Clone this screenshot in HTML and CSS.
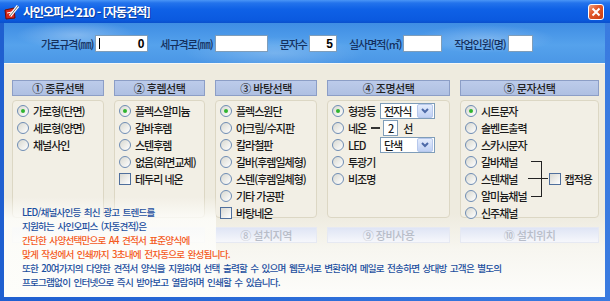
FILE: index.html
```html
<!DOCTYPE html>
<html lang="ko">
<head>
  <meta charset="UTF-8" />
  <title>사인오피스'210 - [자동견적]</title>
  <link rel="stylesheet" href="styles.css">
</head>
<body>

<div class="window">
  <div class="titlebar">
    <svg class="app-icon" width="16" height="16" viewBox="0 0 16 16">
      <path d="M1 6 L10 4 L11 14 L2 15 Z" fill="#d8261a" stroke="#6e0c06" stroke-width="1"/>
      <path d="M3 9 L8 8" stroke="#fff" stroke-width="1"/>
      <path d="M6 12 L14 2" stroke="#fff" stroke-width="3"/>
      <path d="M6 12 L14 2" stroke="#666" stroke-width="1"/>
    </svg>
    <span class="title">사인오피스'210 - [자동견적]</span>
    <span class="close-btn">
      <svg width="10" height="10" viewBox="0 0 10 10">
        <path d="M1.5 1.5 L8.5 8.5 M8.5 1.5 L1.5 8.5" stroke="#fff" stroke-width="2"/>
      </svg>
    </span>
  </div>

  <div class="frame">
    <div class="sky">
      <div class="spec-row">
        <label class="lbl">가로규격(㎜)</label>
        <span class="field w53"><i class="caret"></i>0</span>
        <label class="lbl">세규격로(㎜)</label>
        <span class="field w53"></span>
        <label class="lbl">문자수</label>
        <span class="field w28">5</span>
        <label class="lbl">실사면적(㎡)</label>
        <span class="field w39"></span>
        <label class="lbl">작업인원(명)</label>
        <span class="field w25"></span>
      </div>
    </div>

    <div class="panel">
      <div class="columns">
        <div class="col c1">
          <div class="col-head">① 종류선택</div>
          <div class="col-box">
            <div class="opt"><span class="radio on"></span>가로형(단면)</div>
            <div class="opt"><span class="radio"></span>세로형(양면)</div>
            <div class="opt"><span class="radio"></span>채널사인</div>
          </div>
          <div class="col-head faded"></div>
        </div>

        <div class="col c2">
          <div class="col-head">② 후렘선택</div>
          <div class="col-box">
            <div class="opt"><span class="radio on"></span>플렉스알미늄</div>
            <div class="opt"><span class="radio"></span>갈바후렘</div>
            <div class="opt"><span class="radio"></span>스텐후렘</div>
            <div class="opt"><span class="radio"></span>없음(화면교체)</div>
            <div class="opt"><span class="check"></span>테두리 네온</div>
          </div>
          <div class="col-head faded"></div>
        </div>

        <div class="col c3">
          <div class="col-head">③ 바탕선택</div>
          <div class="col-box">
            <div class="opt"><span class="radio on"></span>플렉스원단</div>
            <div class="opt"><span class="radio"></span>아크릴/수지판</div>
            <div class="opt"><span class="radio"></span>칼라철판</div>
            <div class="opt"><span class="radio"></span>갈바(후렘일체형)</div>
            <div class="opt"><span class="radio"></span>스텐(후렘일체형)</div>
            <div class="opt"><span class="radio"></span>기타 가공판</div>
            <div class="opt"><span class="check"></span>바탕네온</div>
          </div>
          <div class="col-head faded">⑧ 설치지역</div>
        </div>

        <div class="col c4">
          <div class="col-head">④ 조명선택</div>
          <div class="col-box">
            <div class="opt">
              <span class="radio on"></span><span class="opt-label">형광등</span>
              <span class="combo">전자식<span class="combo-btn"><svg width="8" height="6" viewBox="0 0 8 6"><path d="M1 1 L4 4 L7 1" stroke="#4d6aa8" stroke-width="2" fill="none"/></svg></span></span>
            </div>
            <div class="opt">
              <span class="radio"></span>네온<span class="dash"></span><span class="mini-field">2</span>선
            </div>
            <div class="opt">
              <span class="radio"></span><span class="opt-label">LED</span>
              <span class="combo">단색<span class="combo-btn"><svg width="8" height="6" viewBox="0 0 8 6"><path d="M1 1 L4 4 L7 1" stroke="#4d6aa8" stroke-width="2" fill="none"/></svg></span></span>
            </div>
            <div class="opt"><span class="radio"></span>투광기</div>
            <div class="opt"><span class="radio"></span>비조명</div>
          </div>
          <div class="col-head faded">⑨ 장비사용</div>
        </div>

        <div class="col c5">
          <div class="col-head">⑤ 문자선택</div>
          <div class="col-box">
            <div class="opt"><span class="radio on"></span>시트문자</div>
            <div class="opt"><span class="radio"></span>솔벤트출력</div>
            <div class="opt"><span class="radio"></span>스카시문자</div>
            <div class="cap-group">
              <div class="cap-items">
                <div class="opt"><span class="radio"></span>갈바채널</div>
                <div class="opt"><span class="radio"></span>스텐채널</div>
                <div class="opt"><span class="radio"></span>알미늄채널</div>
              </div>
              <span class="bracket"></span>
              <div class="opt cap-opt"><span class="check"></span>캡적용</div>
            </div>
            <div class="opt"><span class="radio"></span>신주채널</div>
          </div>
          <div class="col-head faded">⑩ 설치위치</div>
        </div>
      </div>

      <div class="fade"></div>

      <div class="notice">
        <div class="line blue">LED/채널사인등 최신 광고 트렌드를</div>
        <div class="line blue">지원하는 사인오피스 (자동견적)은</div>
        <div class="line orange">간단한 사양선택만으로 A4 견적서 표준양식에</div>
        <div class="line orange">맞게 작성에서 인쇄까지 3초내에 전자동으로 완성됩니다.</div>
        <div class="line blue">또한 20여가지의 다양한 견적서 양식을 지원하여 선택 출력할 수 있으며 웹문서로 변환하여 메일로 전송하면 상대방 고객은 별도의</div>
        <div class="line blue">프로그램없이 인터넷으로 즉시 받아보고 열람하며 인쇄할 수 있습니다.</div>
      </div>
    </div>
  </div>
</div>

</body>
</html>
```

FILE: styles.css
```css
body {
  margin: 0;
  font-family: "Noto Sans CJK KR", "Liberation Sans", sans-serif;
  background: #fff;
}
.window {
  width: 610px;
  height: 301px;
  overflow: hidden;
  background: #2a66d6;
}

/* title bar */
.titlebar {
  height: 23px;
  display: flex;
  align-items: center;
  padding: 0 6px 0 4px;
  background: linear-gradient(#4a95f6 0, #2373ec 3px, #0f61e6 40%, #0b5ae0 85%, #0a50cc 100%);
}
.app-icon {
  flex: none;
  margin-right: 3px;
}
.title {
  color: #fff;
  font-size: 12px;
  font-weight: bold;
  letter-spacing: -1px;
  text-shadow: 1px 1px 0 #0a3c9c;
}
.close-btn {
  margin-left: auto;
  width: 16px;
  height: 16px;
  box-sizing: border-box;
  border: 1px solid #fff;
  border-radius: 3px;
  background: linear-gradient(135deg, #f0a080 0, #e2582a 40%, #c83c12 100%);
  display: flex;
  align-items: center;
  justify-content: center;
}

/* frame + header area */
.frame {
  padding: 0 5px 4px 4px;
  background: linear-gradient(90deg, #1f5fd0, #3a7be0);
}
.sky {
  height: 40px;
  background:
    radial-gradient(ellipse 60px 14px at 12% 30%, rgba(255,255,255,.3), transparent),
    radial-gradient(ellipse 90px 16px at 45% 75%, rgba(255,255,255,.22), transparent),
    radial-gradient(ellipse 70px 14px at 80% 40%, rgba(255,255,255,.25), transparent),
    linear-gradient(180deg, #3f8de4 0, #55a2ec 55%, #4b97e6 100%);
}
.spec-row {
  display: flex;
  align-items: center;
  padding: 12px 0 0 37px;
}
.lbl {
  font-size: 11px;
  font-weight: 500;
  letter-spacing: -1px;
  color: #14305e;
  margin-left: 12px;
}
.lbl:first-child {
  margin-left: 0;
}
.field {
  margin-left: 2px;
  height: 17px;
  box-sizing: border-box;
  border: 1px solid #7f9db9;
  background: #fff;
  display: flex;
  align-items: center;
  justify-content: flex-end;
  padding-right: 3px;
  font-family: "Liberation Sans", sans-serif;
  font-weight: bold;
  font-size: 12px;
  position: relative;
}
.w53 { width: 53px; }
.w39 { width: 39px; }
.w28 { width: 28px; }
.w25 { width: 25px; }
.caret {
  position: absolute;
  left: 3px;
  top: 2px;
  width: 1px;
  height: 11px;
  background: #000;
}

/* main panel */
.panel {
  position: relative;
  height: 234px;
  box-sizing: border-box;
  border-top: 1px solid #f8f8f4;
  background: linear-gradient(180deg, #eeebdf 0, #eeebdf 150px, #f7f6f0 185px, #fdfdfb 234px);
}
.columns {
  display: flex;
  gap: 10px;
  padding: 16px 0 0 8px;
}
.c1 { width: 92px; }
.c2 { width: 91px; }
.c3 { width: 102px; }
.c4 { width: 123px; }
.c5 { width: 139px; }

.col-head {
  height: 16px;
  box-sizing: border-box;
  border: 1px solid #8c9ec6;
  background: linear-gradient(#bccbea, #afc0e2);
  font-size: 11px;
  font-weight: 500;
  letter-spacing: -0.5px;
  color: #222;
  display: flex;
  align-items: center;
  justify-content: center;
}
.col-head.faded {
  margin-top: 9px;
  border-color: #e6e9f2;
  background: linear-gradient(#dfe5f5, #f6f7fb);
  color: #b8bdc8;
}
.col-box {
  margin-top: 4px;
  height: 118px;
  box-sizing: border-box;
  padding: 1px 4px;
  border: 1px solid #dcd7c4;
  border-radius: 4px;
  background: #f2efe5;
}
.opt {
  height: 17px;
  display: flex;
  align-items: center;
  gap: 4px;
  font-size: 11px;
  font-weight: 500;
  letter-spacing: -1px;
  color: #1a1a1a;
  white-space: nowrap;
}
.radio {
  flex: none;
  width: 12px;
  height: 12px;
  box-sizing: border-box;
  border-radius: 50%;
  border: 1px solid #6f8db4;
  background: linear-gradient(135deg, #d8d8d0, #fff);
  position: relative;
}
.radio.on::after {
  content: '';
  position: absolute;
  left: 3px;
  top: 3px;
  width: 4px;
  height: 4px;
  border-radius: 50%;
  background: #2fb42f;
}
.check {
  flex: none;
  width: 12px;
  height: 12px;
  box-sizing: border-box;
  border: 1px solid #4f6f9c;
  background: linear-gradient(135deg, #d8d8d2, #fff);
}

/* lighting column */
.opt-label {
  width: 28px;
}
.combo {
  width: 55px;
  height: 16px;
  box-sizing: border-box;
  border: 1px solid #7f9db9;
  background: #fff;
  display: flex;
  align-items: center;
  padding: 0 1px 0 3px;
}
.combo-btn {
  margin-left: auto;
  width: 14px;
  height: 12px;
  border: 1px solid #b7c8ec;
  border-radius: 2px;
  background: linear-gradient(#e4ecfc, #bfd0f4);
  display: flex;
  align-items: center;
  justify-content: center;
}
.dash {
  width: 9px;
  height: 2px;
  background: #333;
  margin: 0 -1px 0 1px;
}
.mini-field {
  width: 15px;
  height: 16px;
  box-sizing: border-box;
  border: 1px solid #7f9db9;
  background: #fff;
  display: flex;
  align-items: center;
  justify-content: center;
  font-size: 11px;
  margin-right: 1px;
}

/* channel bracket */
.cap-group {
  display: flex;
  align-items: center;
}
.bracket {
  position: relative;
  width: 10px;
  height: 34px;
  margin-left: 4px;
  border: 1px solid #222;
  border-left: none;
}
.bracket::after {
  content: '';
  position: absolute;
  left: -3px;
  right: -7px;
  top: 16px;
  height: 1px;
  background: #222;
}
.cap-opt {
  margin-left: 7px;
}

/* bottom text */
.fade {
  position: absolute;
  left: 0;
  top: 133px;
  width: 212px;
  height: 100px;
  background: linear-gradient(rgba(255,255,255,0), rgba(253,253,250,.85) 22px, rgba(253,253,250,.9));
}
.notice {
  position: absolute;
  left: 18px;
  top: 141px;
  font-size: 9.6px;
  font-weight: 500;
  letter-spacing: -0.8px;
  word-spacing: 1.4px;
  white-space: nowrap;
}
.line {
  height: 14px;
  line-height: 14px;
}
.blue {
  color: #1c4f9f;
}
.orange {
  color: #f45a1c;
}
```
